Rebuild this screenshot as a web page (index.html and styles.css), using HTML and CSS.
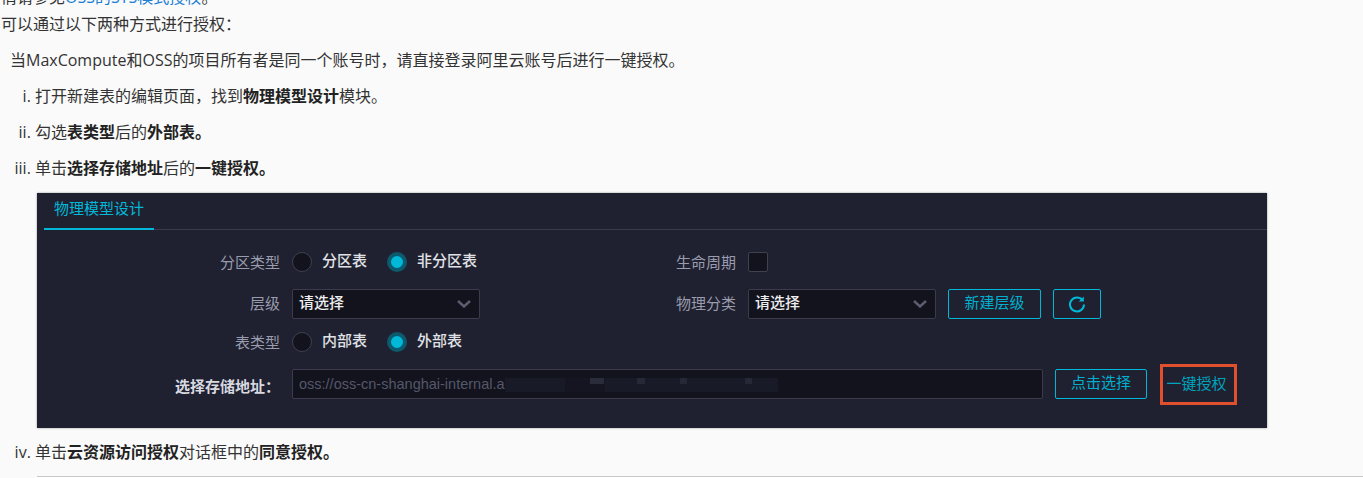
FILE: index.html
```html
<!DOCTYPE html>
<html lang="zh">
<head>
<meta charset="utf-8">
<title>授权</title>
<link rel="stylesheet" href="styles.css">
</head>
<body>
<main class="doc">
  <p class="line clipped">情请参见<a class="link" href="#">OSS的STS模式授权</a>。</p>
  <p class="line">可以通过以下两种方式进行授权：</p>
  <p class="line indent">当MaxCompute和OSS的项目所有者是同一个账号时，请直接登录阿里云账号后进行一键授权。</p>
  <ol class="steps">
    <li>打开新建表的编辑页面，找到<b>物理模型设计</b>模块。</li>
    <li>勾选<b>表类型</b>后的<b>外部表。</b></li>
    <li>单击<b>选择存储地址</b>后的<b>一键授权。</b>
      <section class="panel">
        <div class="tabs"><span class="tab">物理模型设计</span></div>
        <div class="form">
          <div class="row row-a">
            <span class="label">分区类型</span>
            <div class="radios">
              <span class="radio"></span><span class="opt opt-1">分区表</span>
              <span class="radio on"></span><span class="opt">非分区表</span>
            </div>
            <span class="label label-2">生命周期</span>
            <span class="check"></span>
          </div>
          <div class="row row-b">
            <span class="label label-up">层级</span>
            <div class="select"><span class="sel-text">请选择</span><svg class="chev" viewBox="0 0 14 8"><path d="M1 1l6 5.5L13 1" /></svg></div>
            <span class="label label-2b label-up">物理分类</span>
            <div class="select"><span class="sel-text">请选择</span><svg class="chev" viewBox="0 0 14 8"><path d="M1 1l6 5.5L13 1" /></svg></div>
            <button class="btn btn-new">新建层级</button>
            <button class="btn btn-icon"><svg class="refresh" viewBox="0 0 18 18"><path d="M14.6 5.2A7 7 0 1 0 16 9.5" /><path class="fill" d="M15.8 1.6v5h-5z" /></svg></button>
          </div>
          <div class="row row-c">
            <span class="label">表类型</span>
            <div class="radios">
              <span class="radio"></span><span class="opt opt-1">内部表</span>
              <span class="radio on"></span><span class="opt">外部表</span>
            </div>
          </div>
          <div class="row row-d">
            <span class="label strong">选择存储地址：</span>
            <div class="input">
              <span class="oss">oss://oss-cn-shanghai-internal.a</span>
              <span class="mosaic"></span>
            </div>
            <button class="btn btn-pick">点击选择</button>
            <button class="btn btn-auth">一键授权</button>
          </div>
        </div>
      </section>
    </li>
    <li>单击<b>云资源访问授权</b>对话框中的<b>同意授权。</b>
      <div class="next"></div>
    </li>
  </ol>
</main>
</body>
</html>
```
FILE: styles.css
```css
* { box-sizing: border-box; }
html, body { margin: 0; height: 478px; overflow: hidden; background: #fafafa; }
body { font-family: "Open Sans", "Noto Sans CJK SC", sans-serif; font-size: 16px; line-height: 24px; color: #333; }
.doc { margin-top: -15px; padding-left: 1px; }
.line { margin: 0 0 12px; height: 24px; white-space: nowrap; }
.clipped { margin-bottom: 3px; }
.indent { padding-left: 9px; }
.link { color: #1a7fd6; text-decoration: none; }
b { font-weight: 700; color: #222; }
.steps { margin: 0; padding: 0 0 0 34px; list-style: lower-roman; }
.steps li { margin-bottom: 12px; }
.panel { margin: 13px 95px 12px 2px; height: 235px; width: 1230px; background: #1f2130; box-shadow: 0 0 2px #999; }
.tabs { height: 37px; margin-left: 7px; border-bottom: 1px solid #3a3b4c; }
.tab { display: inline-block; height: 37px; width: 110px; padding: 2px 0 0 10px; border-bottom: 2px solid #00b8d8; color: #00b8d8; font-size: 15px; line-height: 26px; }
.form { padding-top: 17px; font-size: 15px; line-height: 30px; }
.row { display: flex; align-items: center; height: 30px; margin-bottom: 12px; }
.row-b { margin-bottom: 8px; }
.label { width: 243px; margin-right: 12px; text-align: right; color: #9a9cae; flex: none; }
.label-up { padding-bottom: 2px; }
.label-2, .label-2b { width: 256px; }
.strong { color: #d8d9e0; font-weight: 700; padding-top: 4px; }
.radios { display: flex; align-items: center; width: 188px; }
.radio { flex: none; width: 20px; height: 20px; border-radius: 50%; background: #12131d; border: 1px solid #40414f; }
.radio.on { background: #00b8d8; border: 4px solid #0b5a6e; }
.opt { margin-left: 10px; color: #e0e1e6; font-weight: 500; white-space: nowrap; position: relative; top: -2px; }
.opt-1 { width: 65px; }
.check { width: 20px; height: 20px; border-radius: 2px; background: #12131d; border: 1px solid #40414f; }
.select { display: flex; align-items: center; justify-content: space-between; width: 188px; height: 30px; padding: 0 8px 0 6px; background: #12131d; border: 1px solid #3a3b4c; border-radius: 2px; color: #eee; font-weight: 500; }
.sel-text { padding-bottom: 4px; line-height: 24px; }
.chev { width: 14px; height: 8px; fill: none; stroke: #5c5e70; stroke-width: 2.4; }
.btn { height: 30px; margin: 0; padding: 0 0 5px; background: transparent; border: 1px solid #00b8d8; border-radius: 2px; color: #00b0ce; font: inherit; line-height: 24px; }
.btn-new { width: 93px; margin-left: 12px; }
.btn-icon { width: 48px; margin-left: 12px; padding: 0; display: flex; align-items: center; justify-content: center; }
.refresh { width: 18px; height: 18px; fill: none; stroke: #00b8d8; stroke-width: 2; }
.refresh .fill { fill: #00b8d8; stroke: none; }
.input { display: flex; align-items: center; width: 751px; height: 30px; padding-left: 6px; background: #12131d; border: 1px solid #3a3b4c; border-radius: 2px; color: #55576a; white-space: nowrap; }
.oss { font-family: "Liberation Sans", sans-serif; font-size: 14.5px; }
.mosaic { height: 14px; width: 273px; margin-top: 1px; background-color: #191a27; background-image: linear-gradient(#2a2b3b, #2a2b3b), linear-gradient(#262737, #262737), linear-gradient(#262737, #262737), linear-gradient(#262737, #262737), linear-gradient(#141520, #141520); background-repeat: no-repeat; background-size: 14px 6px, 8px 6px, 7px 6px, 7px 6px, 40px 14px; background-position: 85px 0, 132px 0, 175px 0, 240px 0, 60px 0; }
.btn-pick { width: 92px; margin-left: 12px; }
.btn-auth { width: 77px; height: 41px; margin-left: 13px; padding: 0 4px 3px 0; border: 3px solid #e0502f; border-radius: 0; color: #00a3be; }
.next { position: absolute; left: 37px; right: 0; top: 476px; height: 2px; border-top: 1px solid #c8c8c8; background: #fff; }
```
